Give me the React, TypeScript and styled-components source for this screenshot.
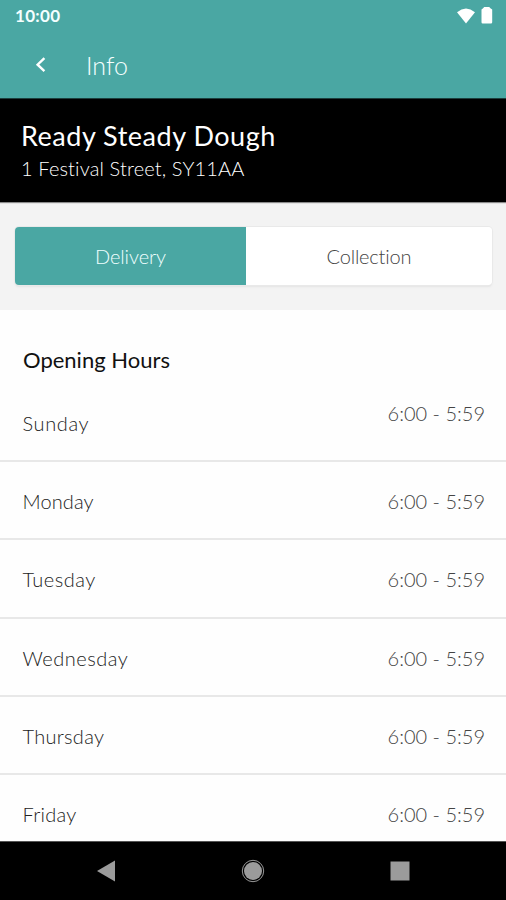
import React from "react";
import styled, { createGlobalStyle } from "styled-components";

const teal = "#4aa7a3";

const GlobalStyle = createGlobalStyle`
  * { box-sizing: border-box; }
  body { margin: 0; background: #fff; font-family: Lato, "Open Sans", sans-serif; font-variant-ligatures: none; }
`;

const Screen = styled.main`
  width: 506px;
  height: 900px;
  display: flex;
  flex-direction: column;
  overflow: hidden;
  background: #fefefe;
`;

const TopArea = styled.header`
  flex: 0 0 98px;
  background: ${teal};
  color: #f4ffff;
`;

const StatusBar = styled.div`
  height: 31px;
  padding: 0 13px 0 15px;
  display: flex;
  align-items: center;
  justify-content: space-between;
`;

const Label = styled.span<{ $size: number; $track?: number; $weight?: number; $color?: string }>`
  font-size: ${(p) => p.$size}px;
  letter-spacing: ${(p) => p.$track ?? 0}px;
  margin-right: ${(p) => -(p.$track ?? 0)}px;
  font-weight: ${(p) => p.$weight ?? 400};
  color: ${(p) => p.$color ?? "inherit"};
  white-space: nowrap;
`;

const StatusIcons = styled.div`
  display: flex;
  gap: 6px;
  align-items: center;
`;

const TitleBar = styled.div`
  height: 66px;
  padding: 2px 0 0 35px;
  display: flex;
  align-items: center;
  gap: 40px;
`;

const Venue = styled.section`
  flex: 0 0 104px;
  background: #000;
  color: #fff;
  padding: 21px 21px 0;
  display: flex;
  flex-direction: column;
  line-height: 32px;
  border-top: 1px solid #1c3f3d;
  box-shadow: 0 1px 1px #8a8a8a;
  position: relative;
`;

const TabArea = styled.section`
  flex: 0 0 108px;
  background: #f3f3f3;
  padding: 25px 14px 0 15px;
`;

const Tabs = styled.div`
  height: 58px;
  display: flex;
  border-radius: 4px;
  overflow: hidden;
  box-shadow: 0 0 0 1px #e9e9e9, 0 2px 2px #e4e4e4;
`;

const Tab = styled.button<{ $active?: boolean }>`
  flex: 0 0 ${(p) => (p.$active ? 231 : 246)}px;
  border: 0;
  padding: 0;
  font-family: inherit;
  background: ${(p) => (p.$active ? teal : "#fff")};
  color: ${(p) => (p.$active ? "#f0ffff" : "#444")};
`;

const Hours = styled.section`
  flex: 1;
  min-height: 0;
  overflow: hidden;
  padding-top: 36px;
`;

const Heading = styled.h2`
  margin: 0 0 1px 23px;
  font-weight: 400;
  line-height: 26px;
  height: 26px;
  color: #111;
`;

const Row = styled.div<{ $first?: boolean }>`
  height: ${(p) => (p.$first ? 89.2 : 78.25)}px;
  padding: ${(p) => (p.$first ? "12px" : "1.4px")} 21px 0 22.5px;
  display: flex;
  align-items: center;
  justify-content: space-between;
  border-bottom: 2px solid #e8e8e8;
`;

const Time = styled.div<{ $raised?: boolean }>`
  padding-bottom: ${(p) => (p.$raised ? 20 : 0)}px;
`;

const NavBar = styled.nav`
  flex: 0 0 59px;
  background: #000;
  border-top: 1px solid #555;
  display: flex;
  align-items: center;
  padding: 0 96px;
  justify-content: space-between;
`;

const days: [string, number][] = [
  ["Sunday", 0.6],
  ["Monday", 0.1],
  ["Tuesday", 0.5],
  ["Wednesday", 0.5],
  ["Thursday", 0.3],
  ["Friday", 0.25],
];

export default function App() {
  return (
    <Screen>
      <GlobalStyle />
      <TopArea>
        <StatusBar>
          <Label $size={17} $weight={700} $track={0.3}>10:00</Label>
          <StatusIcons>
            <svg width="18" height="16" viewBox="0 0 18 16" fill="#fff">
              <path d="M0 4.2Q9-3.2 18 4.2L9 15.5Z" />
            </svg>
            <svg width="12" height="17" viewBox="0 0 12 17" fill="#fff">
              <path d="M3.2 0h5l1.2 1.3 1.8 1.2v12.8q0 1.2-1.2 1.2H1.7q-1.2 0-1.2-1.2V2.5l1.6-1.2Z" />
            </svg>
          </StatusIcons>
        </StatusBar>
        <TitleBar>
          <svg width="11" height="16" viewBox="0 0 11 16" fill="none" stroke="#fff" strokeWidth="2.4">
            <path d="M9.4 1.2 2.6 7.7l6.8 6.5" />
          </svg>
          <Label $size={25} $weight={300}>Info</Label>
        </TitleBar>
      </TopArea>
      <Venue>
        <Label $size={27} $track={0.52}>Ready Steady Dough</Label>
        <Label $size={20} $weight={300} $track={0.14} $color="#fff">1 Festival Street, SY11AA</Label>
      </Venue>
      <TabArea>
        <Tabs>
          <Tab $active><Label $size={20} $weight={300} $track={-0.1}>Delivery</Label></Tab>
          <Tab><Label $size={20} $weight={300} $track={-0.2}>Collection</Label></Tab>
        </Tabs>
      </TabArea>
      <Hours>
        <Heading><Label $size={22}>Opening Hours</Label></Heading>
        {days.map(([day, track], i) => (
          <Row key={day} $first={i === 0}>
            <Label $size={20} $weight={300} $track={track} $color="#222">{day}</Label>
            <Time $raised={i === 0}><Label $size={20} $weight={300} $color="#444">6:00 - 5:59</Label></Time>
          </Row>
        ))}
      </Hours>
      <NavBar>
        <svg width="19" height="22" viewBox="0 0 19 22"><path d="M1 11 19 0.5v21Z" fill="#9b9b9b" /></svg>
        <svg width="24" height="24" viewBox="0 0 24 24">
          <circle cx="12" cy="12" r="10.7" fill="none" stroke="#999" />
          <circle cx="12" cy="12" r="9" fill="#9b9b9b" />
        </svg>
        <svg width="20" height="20" viewBox="0 0 20 20"><path d="M.5.5h19v19H.5Z" fill="#9b9b9b" /></svg>
      </NavBar>
    </Screen>
  );
}
